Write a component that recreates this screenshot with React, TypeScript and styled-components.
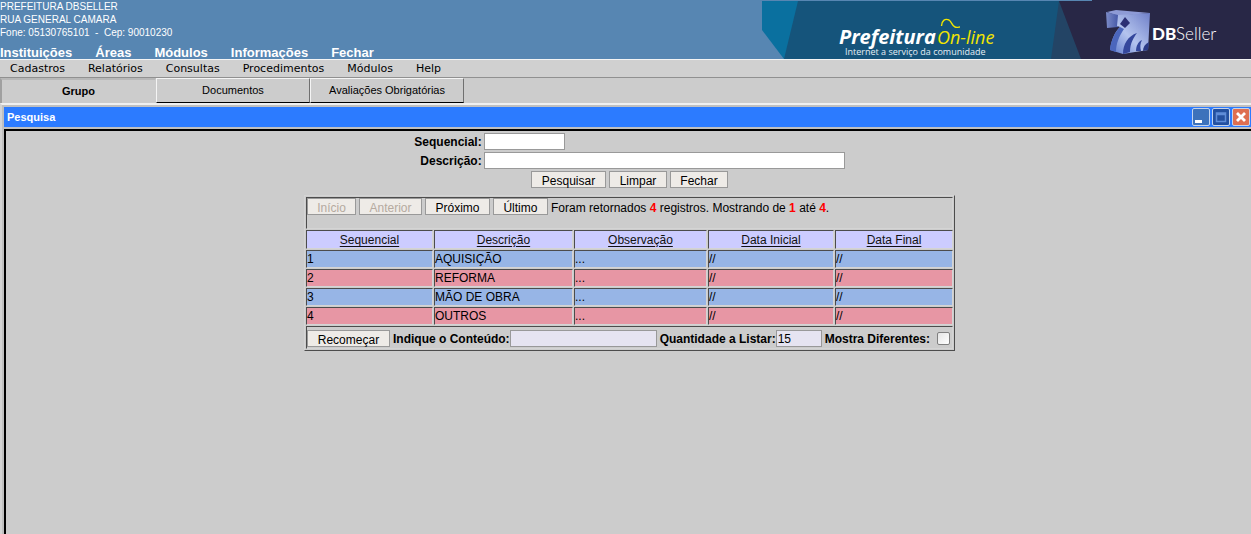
import React from "react";
import styled, { createGlobalStyle, css } from "styled-components";

const sans = `"Liberation Sans", Arial, Helvetica, sans-serif`;

const GlobalStyle = createGlobalStyle`
  * { box-sizing: border-box; }
  html, body, #root { height: 100%; }
  body {
    margin: 0;
    overflow: hidden;
    background: #cccccc;
    color: #000;
    font: 12px/14px ${sans};
  }
`;

const Page = styled.div`
  display: flex;
  flex-direction: column;
  min-height: 100%;
`;

const Header = styled.header`
  display: flex;
  justify-content: space-between;
  background: #5786b2;
  color: #fff;
`;

const HeaderInfo = styled.div`
  display: flex;
  flex-direction: column;
  justify-content: space-between;
`;

const Address = styled.address`
  font-size: 10px;
  font-style: normal;
  line-height: 13px;
  white-space: pre;
`;

const MainNav = styled.nav`
  display: flex;
  gap: 23px;
  font-size: 13px;
  font-weight: bold;
  line-height: 13px;

  a {
    color: #fff;
    text-decoration: none;
  }
`;

const Banner = styled.svg`
  display: block;
  flex: none;
  width: 489px;
  height: 59px;
`;

const MenuBar = styled.nav`
  display: flex;
  gap: 23px;
  padding: 0 10px;
  border-top: 1px solid #f4f4f4;
  border-bottom: 1px solid #909090;
  background: #d0d0d0;
  font: 11px/17px "DejaVu Sans", Verdana, sans-serif;

  a {
    color: #000;
    text-decoration: none;
  }
`;

const Tabs = styled.div`
  display: flex;
  height: 25px;
`;

const Tab = styled.button<{ $active?: boolean }>`
  width: 154px;
  padding: 0 0 2px;
  border: 1px solid;
  border-color: #f4f4f4 #707070 #000 #f4f4f4;
  background: #cccccc;
  color: #000;
  font: 11px/14px ${sans};
  ${(p) =>
    p.$active &&
    css`
      width: 156px;
      border-width: 2px 1px 0 2px;
      border-color: #b8b8b8 #cccccc #cccccc #a0a0a0;
      font-weight: bold;
    `}
`;

const Window = styled.section`
  display: flex;
  flex: 1;
  flex-direction: column;
  padding: 2px 0 0 2px;
  border-top: 2px solid #f0f0f0;
  border-left: 2px solid #d4d4d4;
  background: #c0c0c0;
`;

const TitleBar = styled.div`
  display: flex;
  align-items: center;
  justify-content: space-between;
  height: 20px;
  padding: 0 1px 0 3px;
  background: #2c7bff;
`;

const Title = styled.h1`
  margin: 0;
  color: #fff;
  font-size: 11px;
  line-height: 14px;
`;

const WindowControls = styled.div`
  display: flex;
  gap: 2px;
`;

const ControlButton = styled.button`
  width: 18px;
  height: 18px;
  padding: 0;
  border: 0;
  background: none;

  svg {
    display: block;
  }
`;

const Content = styled.main`
  flex: 1;
  margin-top: 2px;
  padding: 1px 0 0 2px;
  border-top: 2px solid #000;
  border-left: 2px solid #000;
  background: #cccccc;
`;

const SearchForm = styled.form`
  display: flex;
  flex-direction: column;
  align-items: center;
  gap: 1px;
`;

const Fields = styled.div`
  display: grid;
  grid-template-columns: auto auto;
  column-gap: 2px;
  align-items: center;

  label {
    text-align: right;
  }
`;

const Label = styled.label`
  padding-top: 2px;
  font-size: 12px;
  font-weight: bold;
  line-height: 17px;
`;

const TextInput = styled.input<{ $width: number; $tinted?: boolean }>`
  width: ${(p) => p.$width}px;
  height: 17px;
  padding: 1px 1px 0;
  border: 1px solid #999;
  border-radius: 0;
  outline: 0;
  background: ${(p) => (p.$tinted ? "#e6e4f1" : "#fff")};
  color: #000;
  font: 12px/14px ${sans};
`;

const Button = styled.button<{ $width: number }>`
  width: ${(p) => p.$width}px;
  height: 17px;
  padding: 2px 0 0;
  border: 1px solid #999;
  background: #eeebe7;
  color: #000;
  font: 12px/14px ${sans};

  &:disabled {
    color: #b5aa9f;
  }
`;

const ButtonRow = styled.div`
  display: flex;
  gap: 3px;
`;

const Results = styled.table`
  width: 651px;
  margin: 7px auto 0;
  border: 1px solid;
  border-color: #d4d4d4 #4c4c4c #4c4c4c #d4d4d4;
  border-collapse: separate;
  border-spacing: 1px;
  table-layout: fixed;

  td,
  th {
    padding: 0;
    border: 1px solid;
    border-color: #4c4c4c #d4d4d4 #d4d4d4 #4c4c4c;
    font-size: 12px;
    font-weight: normal;
    line-height: 16px;
    text-align: left;
  }
`;

const HeadRow = styled.tr`
  background: #ccccff;

  && th {
    height: 19px;
    padding-top: 1px;
    text-align: center;
  }

  a {
    color: #111;
    text-decoration: underline;
    text-underline-offset: 2px;
  }
`;

const DataRow = styled.tr<{ $odd: boolean }>`
  height: 18px;
  background: ${(p) => (p.$odd ? "#97b5e6" : "#e796a4")};
`;

const Pager = styled.div`
  display: flex;
  gap: 3px;
  height: 30px;
  line-height: 20px;

  strong {
    color: #f00;
  }
`;

const FilterBar = styled.div`
  display: flex;
  align-items: center;
  gap: 3px;
  padding: 2px 2px 0 0;
`;

const Field = styled.div`
  display: flex;
  align-items: center;
`;

const CheckField = styled(Field)`
  flex: 1;
  justify-content: space-between;
`;

const Checkbox = styled.input`
  appearance: none;
  width: 13px;
  height: 13px;
  margin: 0;
  border: 1px solid #808080;
  border-radius: 2px;
  background: linear-gradient(135deg, #e4e4e4, #fff);
`;

const menu = ["Cadastros", "Relatórios", "Consultas", "Procedimentos", "Módulos", "Help"];
const mainMenu = ["Instituições", "Áreas", "Módulos", "Informações", "Fechar"];
const columns = [
  { name: "Sequencial", width: 127 },
  { name: "Descrição", width: 139 },
  { name: "Observação", width: 133 },
  { name: "Data Inicial", width: 126 },
  { name: "Data Final", width: 118 },
];
const rows = ["AQUISIÇÃO", "REFORMA", "MÃO DE OBRA", "OUTROS"];

function BannerArt() {
  return (
    <Banner viewBox="0 0 489 59" role="img" aria-label="Prefeitura On-line, DBSeller">
      <defs>
        <linearGradient id="front" x1="0" y1="1" x2="1" y2="0">
          <stop offset="0" stopColor="#5c78cc" />
          <stop offset="0.45" stopColor="#b4c4ee" />
          <stop offset="1" stopColor="#6f7fc8" />
        </linearGradient>
        <linearGradient id="side" x1="0" y1="0" x2="1" y2="0">
          <stop offset="0" stopColor="#7c8cc8" />
          <stop offset="1" stopColor="#4659a8" />
        </linearGradient>
      </defs>
      <path d="M0 1H330V59H22L0 30Z" fill="#0a709f" />
      <path d="M36 1H320V59H22Z" fill="#15547b" />
      <path d="M297 1H330V59H289Z" fill="#234465" />
      <path d="M297 1H330V0H489V59H319Z" fill="#282746" />
      <text x="77" y="44" fontFamily="Open Sans" fontSize="20" fontWeight="700" fontStyle="italic" fill="#fff">Prefeitura</text>
      <text x="175" y="44" fontFamily="Open Sans" fontSize="18" fontStyle="italic" fill="#f2e500">On-line</text>
      <path d="M179.500 26C179.500 21 183 18 187 20C190 22 190 26 193 27C195 28 197 27 198 27" fill="none" stroke="#f2e500" strokeWidth="1.400" />
      <text x="83" y="55" fontFamily="Open Sans" fontSize="9" fill="#e4eef5">Internet a serviço da comunidade</text>
      <path d="M345 12L354 10L388 13L356 16Z" fill="#8e9bd6" />
      <path d="M344 12L356 15V27L345 28Z" fill="url(#side)" />
      <path d="M356 15L388 13L386 50L373 52L361 54L348 50C349 40 353 32 358 27L355 26Z" fill="url(#front)" />
      <path d="M348 50C349 40 353 32 358 27L362 29C357 36 354 44 354 52Z" fill="#4b66bd" />
      <path d="M363 17L368 23L363 28L358 24Z" fill="#2b2f74" />
      <path d="M361 54C361 44 366 36 375 33C372 37 368 43 368 52Z" fill="#34479c" />
      <path d="M374 51C374 46 376 42 380 40C378 44 378 47 379 51Z" fill="#34479c" />
      <path d="M381 51C381 47 383 44 387 42L386 50Z" fill="#2b3a86" />
      <text x="390" y="40" fontFamily="Lato" fontSize="17" fontWeight="900" fill="#fff">DB</text>
      <text x="414" y="40" fontFamily="Lato" fontSize="17" fontWeight="300" fill="#fff">Seller</text>
    </Banner>
  );
}

function ControlIcon({ kind }: { kind: "min" | "max" | "close" }) {
  const fill = { min: "#3d72bb", max: "#2450a0", close: "#de6f51" }[kind];
  return (
    <svg width="18" height="18" viewBox="0 0 18 18">
      <rect x="0.5" y="0.5" width="17" height="17" rx="1.5" fill={fill} stroke="#c4d4ee" />
      {kind === "min" && <rect x="3" y="12" width="7" height="3" fill="#fff" />}
      {kind === "max" && (
        <path d="M4.500 5H13.500V13.500H4.500ZM4 6.500H14" fill="none" stroke="#5f8cd8" strokeWidth="1.500" />
      )}
      {kind === "close" && <path d="M5 5L13 13M13 5L5 13" stroke="#fff" strokeWidth="2.800" />}
    </svg>
  );
}

export default function App() {
  return (
    <Page>
      <GlobalStyle />
      <Header>
        <HeaderInfo>
          <Address>
            PREFEITURA DBSELLER
            <br />
            RUA GENERAL CAMARA
            <br />
            {"Fone: 05130765101  -  Cep: 90010230"}
          </Address>
          <MainNav>
            {mainMenu.map((item) => (
              <a href="#" key={item}>{item}</a>
            ))}
          </MainNav>
        </HeaderInfo>
        <BannerArt />
      </Header>
      <MenuBar>
        {menu.map((item) => (
          <a href="#" key={item}>{item}</a>
        ))}
      </MenuBar>
      <Tabs>
        <Tab $active>Grupo</Tab>
        <Tab>Documentos</Tab>
        <Tab>Avaliações Obrigatórias</Tab>
      </Tabs>
      <Window>
        <TitleBar>
          <Title>Pesquisa</Title>
          <WindowControls>
            <ControlButton aria-label="Minimizar"><ControlIcon kind="min" /></ControlButton>
            <ControlButton aria-label="Maximizar"><ControlIcon kind="max" /></ControlButton>
            <ControlButton aria-label="Fechar janela"><ControlIcon kind="close" /></ControlButton>
          </WindowControls>
        </TitleBar>
        <Content>
          <SearchForm onSubmit={(e) => e.preventDefault()}>
            <Fields>
              <Label htmlFor="seq">Sequencial:</Label>
              <TextInput id="seq" $width={81} />
              <Label htmlFor="desc">Descrição:</Label>
              <TextInput id="desc" $width={361} autoFocus />
            </Fields>
            <ButtonRow>
              <Button type="submit" $width={75}>Pesquisar</Button>
              <Button type="reset" $width={58}>Limpar</Button>
              <Button type="button" $width={58}>Fechar</Button>
            </ButtonRow>
          </SearchForm>
          <Results>
            <colgroup>
              {columns.map((c) => (
                <col key={c.name} width={c.width} />
              ))}
            </colgroup>
            <thead>
              <tr>
                <td colSpan={5}>
                  <Pager>
                    <Button disabled $width={49}>Início</Button>
                    <Button disabled $width={63}>Anterior</Button>
                    <Button $width={65}>Próximo</Button>
                    <Button $width={55}>Último</Button>
                    <span>
                      Foram retornados <strong>4</strong> registros. Mostrando de <strong>1</strong> até <strong>4</strong>.
                    </span>
                  </Pager>
                </td>
              </tr>
              <HeadRow>
                {columns.map((c) => (
                  <th key={c.name}><a href="#">{c.name}</a></th>
                ))}
              </HeadRow>
            </thead>
            <tbody>
              {rows.map((name, i) => (
                <DataRow key={name} $odd={i % 2 === 0}>
                  <td>{i + 1}</td>
                  <td>{name}</td>
                  <td>...</td>
                  <td>//</td>
                  <td>//</td>
                </DataRow>
              ))}
            </tbody>
            <tfoot>
              <tr>
                <td colSpan={5}>
                  <FilterBar>
                    <Button $width={83}>Recomeçar</Button>
                    <Field>
                      <Label htmlFor="filter">Indique o Conteúdo:</Label>
                      <TextInput id="filter" $width={147} $tinted />
                    </Field>
                    <Field>
                      <Label htmlFor="qty">Quantidade a Listar:</Label>
                      <TextInput id="qty" $width={46} $tinted defaultValue="15" />
                    </Field>
                    <CheckField>
                      <Label htmlFor="diff">Mostra Diferentes:</Label>
                      <Checkbox id="diff" type="checkbox" />
                    </CheckField>
                  </FilterBar>
                </td>
              </tr>
            </tfoot>
          </Results>
        </Content>
      </Window>
    </Page>
  );
}
